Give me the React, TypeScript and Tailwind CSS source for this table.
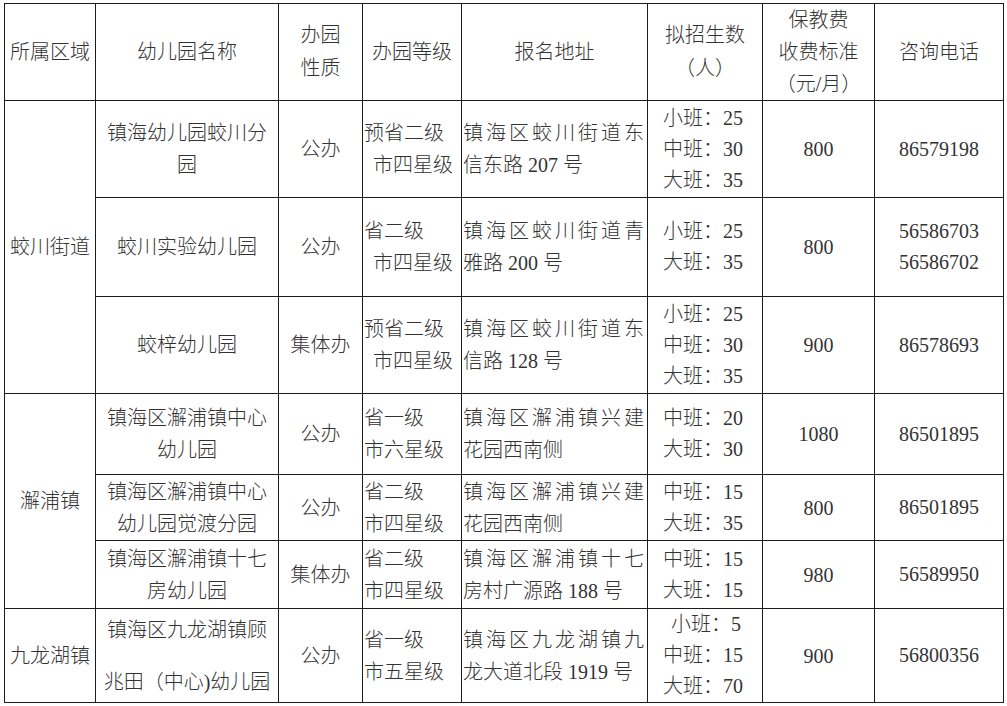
type Row = {
  name: string[];
  nameLoose?: boolean;
  kind: string;
  grade: [string, string];
  gradeIndent?: boolean;
  addr: [string, string];
  quota: string[];
  quotaIndentFirst?: boolean;
  fee: string;
  phones: string[];
  h: string;
};

const groups: { region: string; rows: Row[] }[] = [
  {
    region: "蛟川街道",
    rows: [
      {
        name: ["镇海幼儿园蛟川分", "园"],
        kind: "公办",
        grade: ["预省二级", "市四星级"],
        gradeIndent: true,
        addr: ["镇海区蛟川街道东", "信东路 207 号"],
        quota: ["小班：25", "中班：30", "大班：35"],
        fee: "800",
        phones: ["86579198"],
        h: "h-[97px]",
      },
      {
        name: ["蛟川实验幼儿园"],
        kind: "公办",
        grade: ["省二级", "市四星级"],
        gradeIndent: true,
        addr: ["镇海区蛟川街道青", "雅路 200 号"],
        quota: ["小班：25", "大班：35"],
        fee: "800",
        phones: ["56586703", "56586702"],
        h: "h-[99px]",
      },
      {
        name: ["蛟梓幼儿园"],
        kind: "集体办",
        grade: ["预省二级", "市四星级"],
        gradeIndent: true,
        addr: ["镇海区蛟川街道东", "信路 128 号"],
        quota: ["小班：25", "中班：30", "大班：35"],
        fee: "900",
        phones: ["86578693"],
        h: "h-[97px]",
      },
    ],
  },
  {
    region: "澥浦镇",
    rows: [
      {
        name: ["镇海区澥浦镇中心", "幼儿园"],
        kind: "公办",
        grade: ["省一级", "市六星级"],
        addr: ["镇海区澥浦镇兴建", "花园西南侧"],
        quota: ["中班：20", "大班：30"],
        fee: "1080",
        phones: ["86501895"],
        h: "h-[81px]",
      },
      {
        name: ["镇海区澥浦镇中心", "幼儿园觉渡分园"],
        kind: "公办",
        grade: ["省二级", "市四星级"],
        addr: ["镇海区澥浦镇兴建", "花园西南侧"],
        quota: ["中班：15", "大班：35"],
        fee: "800",
        phones: ["86501895"],
        h: "h-[66px]",
      },
      {
        name: ["镇海区澥浦镇十七", "房幼儿园"],
        kind: "集体办",
        grade: ["省二级", "市四星级"],
        addr: ["镇海区澥浦镇十七", "房村广源路 188 号"],
        quota: ["中班：15", "大班：15"],
        fee: "980",
        phones: ["56589950"],
        h: "h-[68px]",
      },
    ],
  },
  {
    region: "九龙湖镇",
    rows: [
      {
        name: ["镇海区九龙湖镇顾", "兆田（中心)幼儿园"],
        nameLoose: true,
        kind: "公办",
        grade: ["省一级", "市五星级"],
        addr: ["镇海区九龙湖镇九", "龙大道北段 1919 号"],
        quota: ["小班：5", "中班：15", "大班：70"],
        quotaIndentFirst: true,
        fee: "900",
        phones: ["56800356"],
        h: "h-[93px]",
      },
    ],
  },
];

const cell = "border border-[#1c1c1c] align-middle p-0";

export default function App() {
  return (
    <div className="min-h-screen bg-white pl-[4px] pt-[3px]">
      <table className="table-fixed border-collapse font-['Liberation_Serif','Noto_Sans_CJK_SC',serif] text-[20px] font-light text-[#333] w-[999px]">
        <colgroup>
          <col className="w-[91px]" />
          <col className="w-[183px]" />
          <col className="w-[84px]" />
          <col className="w-[99px]" />
          <col className="w-[186px]" />
          <col className="w-[115px]" />
          <col className="w-[112px]" />
          <col className="w-[129px]" />
        </colgroup>
        <thead>
          <tr className="h-[95px] text-center leading-[33px]">
            <th className={`${cell} font-light`}>所属区域</th>
            <th className={`${cell} font-light`}>幼儿园名称</th>
            <th className={`${cell} font-light`}>
              <div>办园</div>
              <div>性质</div>
            </th>
            <th className={`${cell} font-light`}>办园等级</th>
            <th className={`${cell} font-light`}>报名地址</th>
            <th className={`${cell} font-light`}>
              <div>拟招生数</div>
              <div>（人）</div>
            </th>
            <th className={`${cell} font-light leading-[32px]`}>
              <div>保教费</div>
              <div>收费标准</div>
              <div>（元/月）</div>
            </th>
            <th className={`${cell} font-light`}>咨询电话</th>
          </tr>
        </thead>
        <tbody>
          {groups.map((g) =>
            g.rows.map((r, i) => (
              <tr key={g.region + i} className={r.h}>
                {i === 0 && (
                  <td rowSpan={g.rows.length} className={`${cell} text-center`}>
                    {g.region}
                  </td>
                )}
                <td className={`${cell} text-center leading-[32px]`}>
                  <div className={`flex flex-col ${r.nameLoose ? "gap-[20px]" : ""}`}>
                    {r.name.map((t) => (
                      <div key={t} className="whitespace-nowrap">{t}</div>
                    ))}
                  </div>
                </td>
                <td className={`${cell} text-center`}>{r.kind}</td>
                <td className={`${cell} pl-[1px] leading-[32px]`}>
                  <div className="whitespace-nowrap">{r.grade[0]}</div>
                  <div className={`whitespace-nowrap ${r.gradeIndent ? "pl-[9px]" : ""}`}>{r.grade[1]}</div>
                </td>
                <td className={`${cell} px-[1px] leading-[32px]`}>
                  <div className="text-justify [text-align-last:justify] whitespace-nowrap tracking-[2px]">
                    {r.addr[0]}
                  </div>
                  <div className="whitespace-nowrap">{r.addr[1]}</div>
                </td>
                <td className={`${cell} pl-[15px] leading-[31px]`}>
                  {r.quota.map((q, k) => (
                    <div
                      key={q}
                      className={`whitespace-nowrap ${k === 0 && r.quotaIndentFirst ? "pl-[8px]" : ""}`}
                    >
                      {q}
                    </div>
                  ))}
                </td>
                <td className={`${cell} text-center`}>{r.fee}</td>
                <td className={`${cell} text-center leading-[31px]`}>
                  {r.phones.map((p) => (
                    <div key={p}>{p}</div>
                  ))}
                </td>
              </tr>
            ))
          )}
        </tbody>
      </table>
    </div>
  );
}
